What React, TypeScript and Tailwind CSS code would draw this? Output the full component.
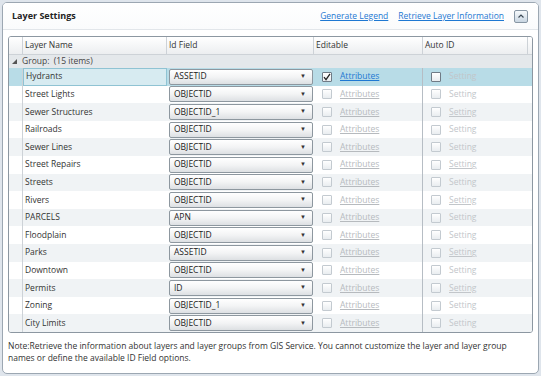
import React from 'react';

// Layer settings panel: grid of layers with id field pickers and editable flags.

interface LayerRow {
  name: string;
  idField: string;
  settingLink: boolean;
}

const rows: LayerRow[] = [
  { name: 'Hydrants', idField: 'ASSETID', settingLink: false },
  { name: 'Street Lights', idField: 'OBJECTID', settingLink: false },
  { name: 'Sewer Structures', idField: 'OBJECTID_1', settingLink: true },
  { name: 'Railroads', idField: 'OBJECTID', settingLink: false },
  { name: 'Sewer Lines', idField: 'OBJECTID', settingLink: false },
  { name: 'Street Repairs', idField: 'OBJECTID', settingLink: true },
  { name: 'Streets', idField: 'OBJECTID', settingLink: false },
  { name: 'Rivers', idField: 'OBJECTID', settingLink: true },
  { name: 'PARCELS', idField: 'APN', settingLink: false },
  { name: 'Floodplain', idField: 'OBJECTID', settingLink: false },
  { name: 'Parks', idField: 'ASSETID', settingLink: true },
  { name: 'Downtown', idField: 'OBJECTID', settingLink: false },
  { name: 'Permits', idField: 'ID', settingLink: true },
  { name: 'Zoning', idField: 'OBJECTID_1', settingLink: false },
  { name: 'City Limits', idField: 'OBJECTID', settingLink: false },
];

const CheckBox: React.FC<{ checked?: boolean; active?: boolean }> = ({ checked, active }) => (
  <span
    className={
      'w-[10px] h-[10px] flex items-center justify-center border rounded-[1px] bg-gradient-to-b from-white to-[#e9edf0] ' +
      (active ? 'border-[#6f7b86]' : 'border-[#c3cad0]')
    }
  >
    {checked && (
      <svg width="8" height="8" viewBox="0 0 8 8">
        <path d="M1 4.2 L3 6.6 L7 0.8" fill="none" stroke="#222" strokeWidth="1.3" />
      </svg>
    )}
  </span>
);

const App: React.FC = () => {
  return (
    <div
      className="w-[541px] h-[376px] bg-[#dfe5ec] p-[2px] text-[8.5px] text-[#333]"
      style={{ fontFamily: '"Open Sans", "Liberation Sans", sans-serif' }}
    >
      <div className="h-full flex flex-col bg-white border border-[#9ca7b2] rounded-[5px] overflow-hidden">
        <div className="h-[27px] flex items-center pl-[9px] pr-[10px] border-b border-[#e2e6ea] bg-gradient-to-b from-white to-[#fafbfc]">
          <span className="font-bold text-[9px] text-[#222]">Layer Settings</span>
          <div className="ml-auto flex items-center gap-[10px]">
            <span className="text-[#1e78d2] underline">Generate Legend</span>
            <span className="text-[#1e78d2] underline">Retrieve Layer Information</span>
            <span className="w-[14px] h-[13px] flex items-center justify-center border border-[#8796a4] rounded-[2px] bg-gradient-to-b from-[#f7fafc] to-[#c9d6e2]">
              <svg width="6" height="4" viewBox="0 0 6 4">
                <path d="M0.5 3.5 L3 1 L5.5 3.5" fill="none" stroke="#3c4a56" strokeWidth="1.2" />
              </svg>
            </span>
          </div>
        </div>

        <div className="mx-[5px] mt-[6px] border border-[#8c97a1] rounded-[3px] overflow-hidden grid grid-cols-[14px_144px_147px_109px_105px_1fr]">
          {/* header */}
          <div className="h-[18px] bg-gradient-to-b from-white to-[#eceef0] border-b border-r border-[#cdd2d7]" />
          <div className="h-[18px] pl-[2px] flex items-center bg-gradient-to-b from-white to-[#eceef0] border-b border-r border-[#cdd2d7]">Layer Name</div>
          <div className="h-[18px] pl-[2px] flex items-center bg-gradient-to-b from-white to-[#eceef0] border-b border-r border-[#cdd2d7]">Id Field</div>
          <div className="h-[18px] pl-[2px] flex items-center bg-gradient-to-b from-white to-[#eceef0] border-b border-r border-[#cdd2d7]">Editable</div>
          <div className="h-[18px] pl-[2px] flex items-center bg-gradient-to-b from-white to-[#eceef0] border-b border-r border-[#cdd2d7]">Auto ID</div>
          <div className="h-[18px] bg-gradient-to-b from-white to-[#eceef0] border-b border-[#cdd2d7]" />

          {/* group row */}
          <div className="col-span-6 h-[13px] flex items-center bg-[#e4e8eb] text-[#444] pl-[3px] gap-[5px]">
            <svg width="5" height="5" viewBox="0 0 5 5">
              <path d="M5 0 L5 5 L0 5 Z" fill="#555" />
            </svg>
            <span>Group:&nbsp; (15 items)</span>
          </div>

          {rows.map((r, i) => {
            const selected = i === 0;
            const bg = selected ? 'bg-[#b8dce7]' : i % 2 === 0 ? 'bg-[#f0f3f5]' : 'bg-white';
            return (
              <React.Fragment key={r.name}>
                <div className={'h-[17.6px] border-r border-[#cdd2d7] ' + bg} />
                <div className={'h-[17.6px] ' + bg}>
                  <div
                    className={
                      'h-full flex items-center pl-[2px] ' +
                      (selected ? 'bg-[#d7ebf1] border border-[#8fc3d3]' : '')
                    }
                  >
                    {r.name}
                  </div>
                </div>
                <div className={'h-[17.6px] flex items-center pl-[2px] pr-[1px] ' + bg}>
                  <div className="w-full h-[16px] flex items-center pl-[4px] pr-[6px] border border-[#8d979f] rounded-[2px] bg-gradient-to-b from-white via-[#f3f4f5] to-[#dde0e3] text-[#222]">
                    <span>{r.idField}</span>
                    <span className="ml-auto text-[6px] text-[#333]">▼</span>
                  </div>
                </div>
                <div className={'h-[17.6px] flex items-center pl-[8px] gap-[8px] border-r border-[#b6bdc4] ' + bg}>
                  <CheckBox checked={selected} active={selected} />
                  <span className={'underline ' + (selected ? 'text-[#1e78d2]' : 'text-[#b6babe]')}>Attributes</span>
                </div>
                <div className={'h-[17.6px] flex items-center pl-[8px] gap-[8px] ' + bg}>
                  <CheckBox active={selected} />
                  <span className={'text-[#c2c6ca] ' + (r.settingLink ? 'underline' : '')}>Setting</span>
                </div>
                <div className={'h-[17.6px] ' + bg} />
              </React.Fragment>
            );
          })}
        </div>

        <div className="px-[5px] pt-[7px] leading-[12px]">
          Note:Retrieve the information about layers and layer groups from GIS Service. You cannot customize the layer and layer group names or define the available ID Field options.
        </div>
      </div>
    </div>
  );
};

export default App;
